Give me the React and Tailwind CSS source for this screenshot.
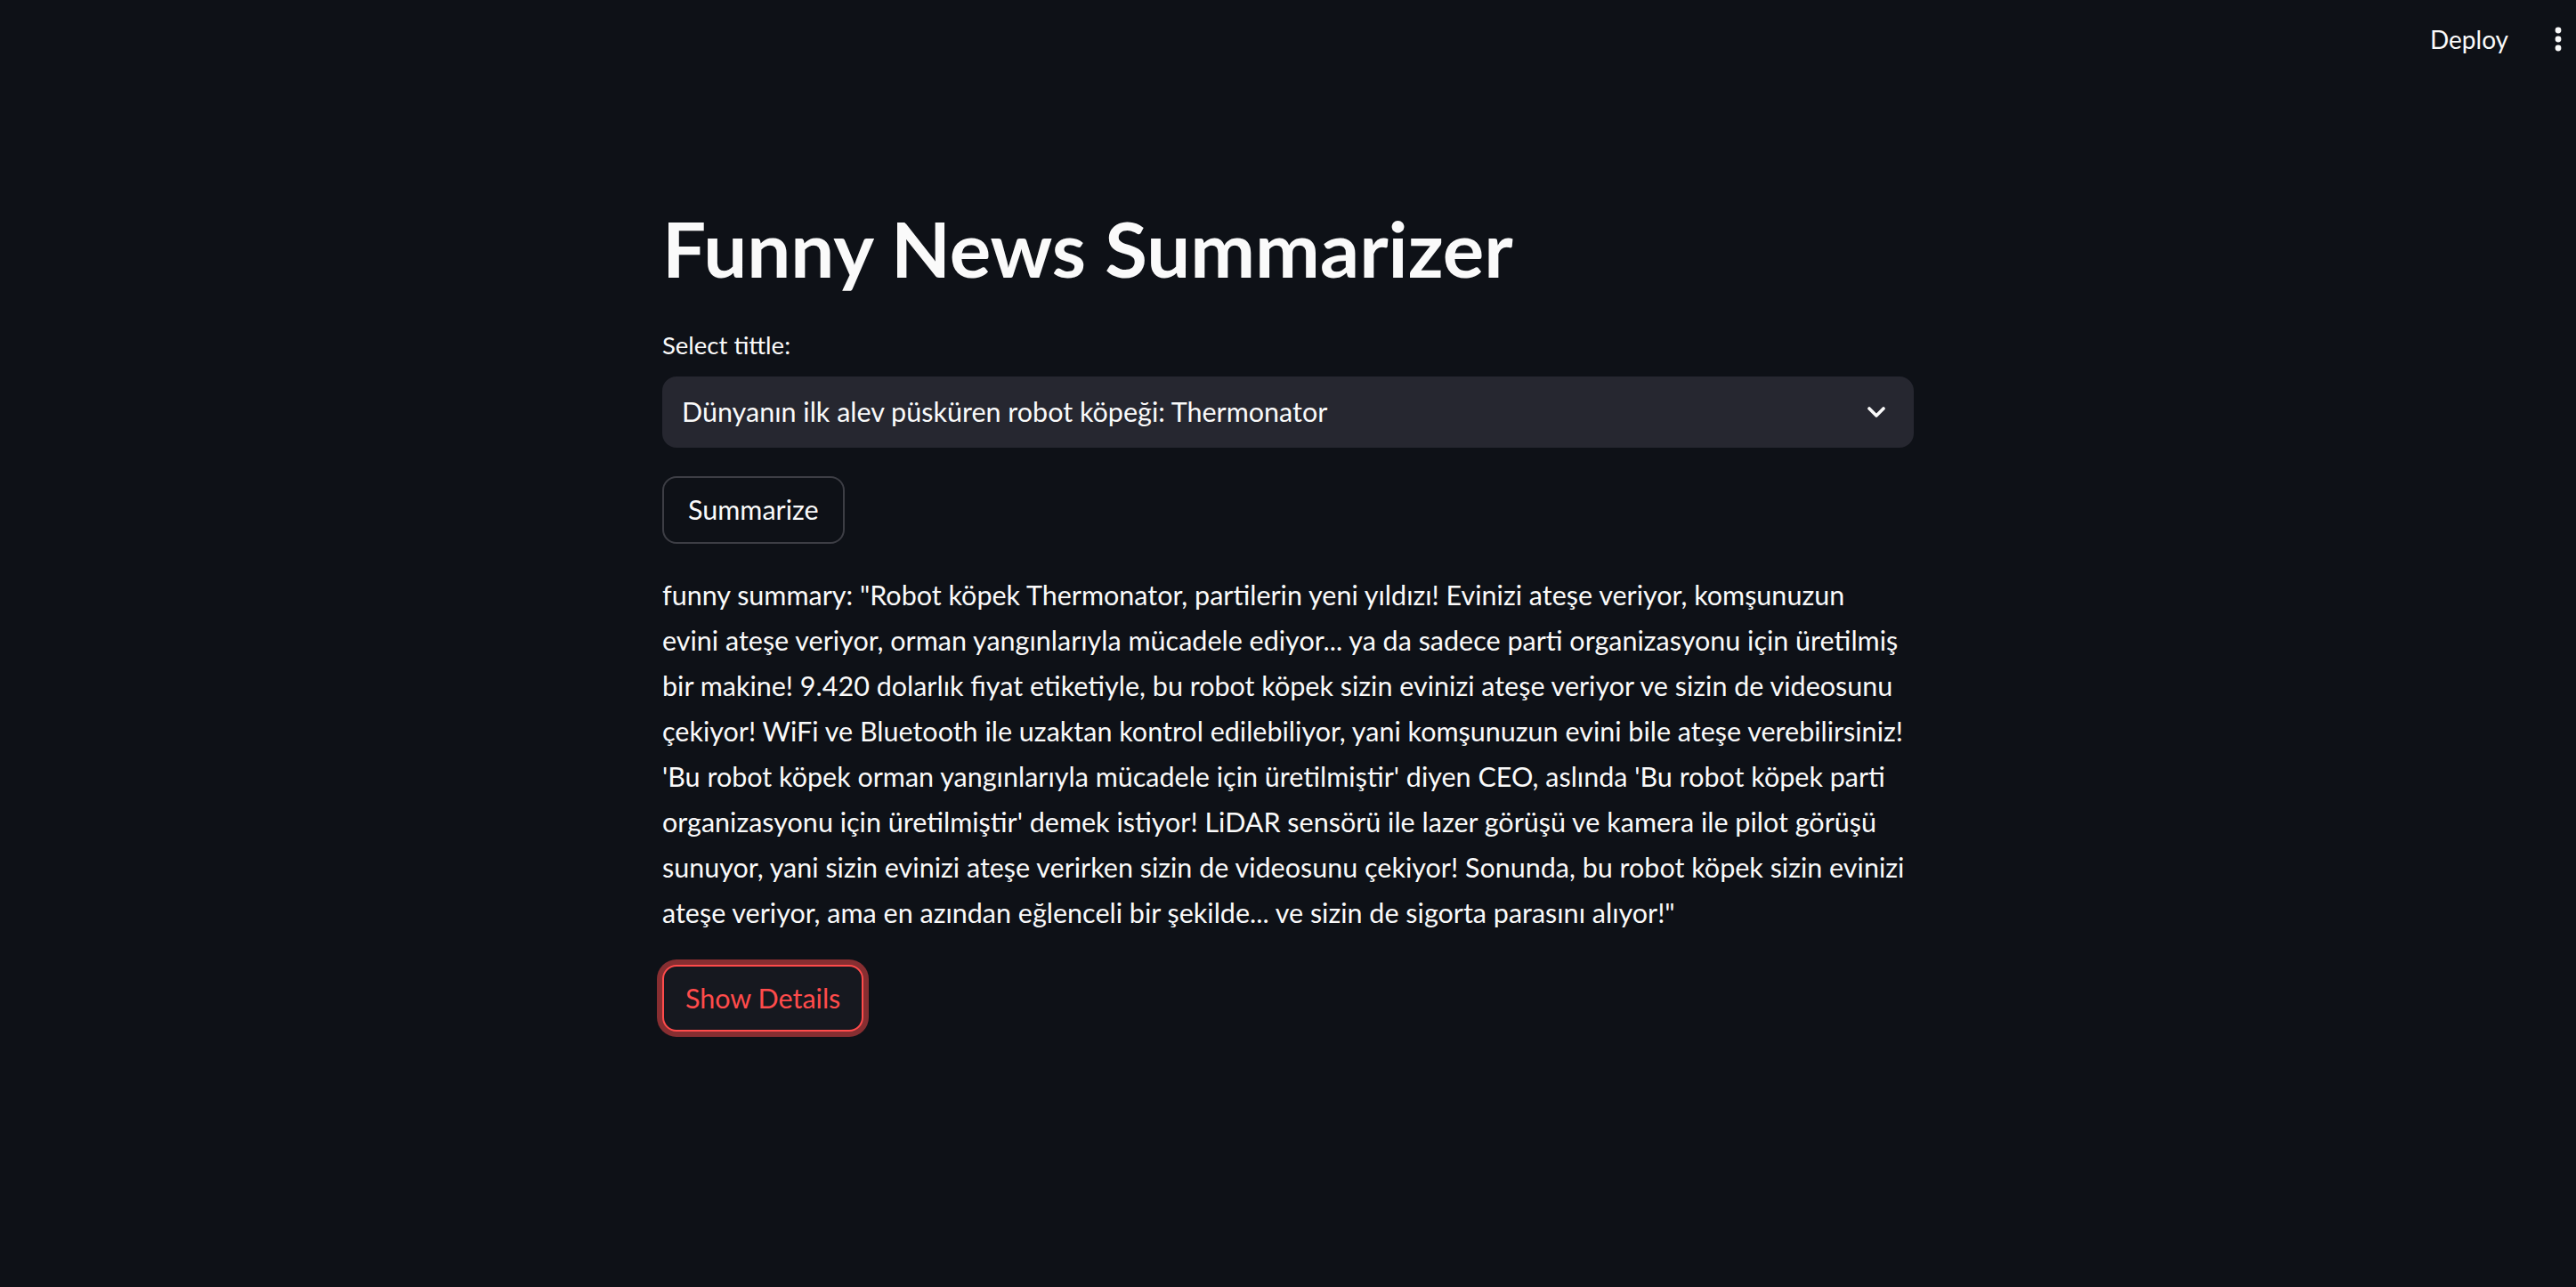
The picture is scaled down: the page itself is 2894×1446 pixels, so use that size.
import React from 'react';

const summaryLines = [
  'funny summary: "Robot köpek Thermonator, partilerin yeni yıldızı! Evinizi ateşe veriyor, komşunuzun',
  'evini ateşe veriyor, orman yangınlarıyla mücadele ediyor... ya da sadece parti organizasyonu için üretilmiş',
  'bir makine! 9.420 dolarlık fiyat etiketiyle, bu robot köpek sizin evinizi ateşe veriyor ve sizin de videosunu',
  'çekiyor! WiFi ve Bluetooth ile uzaktan kontrol edilebiliyor, yani komşunuzun evini bile ateşe verebilirsiniz!',
  "'Bu robot köpek orman yangınlarıyla mücadele için üretilmiştir' diyen CEO, aslında 'Bu robot köpek parti",
  "organizasyonu için üretilmiştir' demek istiyor! LiDAR sensörü ile lazer görüşü ve kamera ile pilot görüşü",
  'sunuyor, yani sizin evinizi ateşe verirken sizin de videosunu çekiyor! Sonunda, bu robot köpek sizin evinizi',
  'ateşe veriyor, ama en azından eğlenceli bir şekilde... ve sizin de sigorta parasını alıyor!"',
];

const App = () => {
  return (
    <div className="min-h-screen bg-[#0e1117] text-[#fafafa] font-['Lato','Noto_Sans',sans-serif]">
      {/* Header */}
      <header className="h-[88px] flex justify-end items-center pr-[16px]">
        <button className="text-[28px] leading-none text-[#fafafa] mr-[52px]">Deploy</button>
        <svg width="8" height="28" viewBox="0 0 8 28" className="fill-[#fafafa]">
          <circle cx="4" cy="4" r="3.4" />
          <circle cx="4" cy="14" r="3.4" />
          <circle cx="4" cy="24" r="3.4" />
        </svg>
      </header>

      <main className="mx-auto w-[1406px] pt-[141px] pb-[100px]">
        <h1 className="text-[87px] leading-[100px] font-bold">Funny News Summarizer</h1>

        <label className="block mt-[39px] text-[27.5px] leading-[40px]">Select tittle:</label>

        {/* Select box */}
        <div className="mt-[15px] h-[80px] rounded-[16px] bg-[#262730] flex items-center justify-between pl-[22px] pr-[32px]">
          <span className="text-[30.5px]">Dünyanın ilk alev püsküren robot köpeği: Thermonator</span>
          <svg width="20" height="12" viewBox="0 0 20 12" fill="none" className="stroke-[#fafafa]">
            <polyline points="2,2 10,10 18,2" strokeWidth="3.6" strokeLinecap="round" strokeLinejoin="round" />
          </svg>
        </div>

        <button className="mt-[32px] h-[76px] px-[27px] rounded-[16px] border-2 border-[#3d3e45] text-[30.5px] bg-[#0e1117]">
          Summarize
        </button>

        <p className="mt-[32px] text-[30.5px] leading-[51px]">
          {summaryLines.map((line, i) => (
            <span key={i} className="block whitespace-nowrap">{line}</span>
          ))}
        </p>

        <button className="mt-[33px] h-[75px] px-[24px] rounded-[16px] border-2 border-[#ff4b4b] ring-[6px] ring-[#ff4b4b]/50 bg-[#16181f] text-[30.5px] text-[#ff4b4b]">
          Show Details
        </button>
      </main>
    </div>
  );
};

export default App;
